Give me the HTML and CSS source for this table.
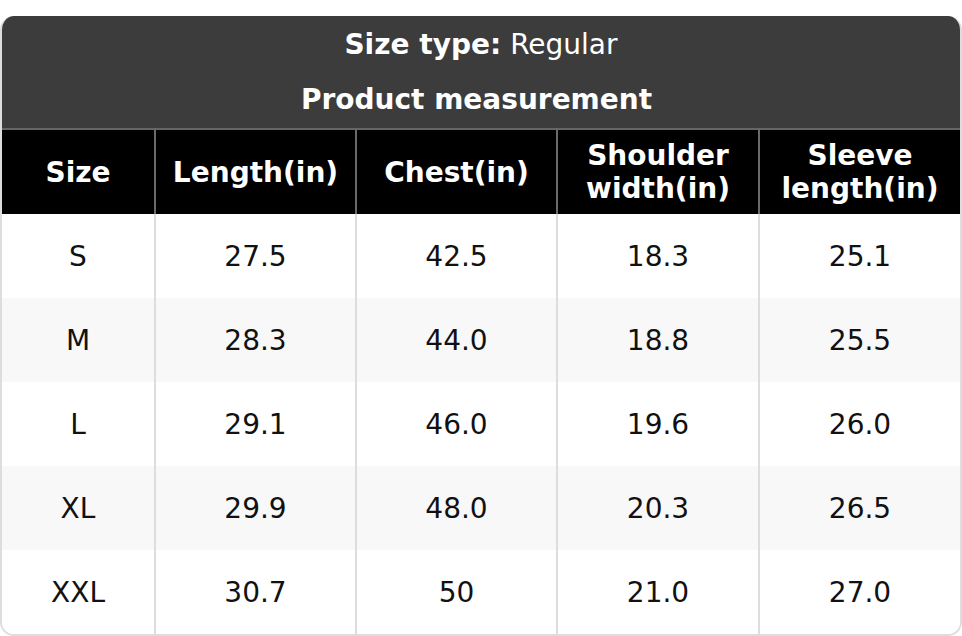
FILE: index.html
```html
<!DOCTYPE html>
<html>
<head>
<meta charset="utf-8">
<link rel="stylesheet" href="styles.css">
</head>
<body>
<div class="card">
  <div class="title">
    <div class="title-line"><b>Size type:</b> Regular</div>
    <div class="title-line second"><b>Product measurement</b></div>
  </div>
  <div class="grid">
    <div class="th">Size</div>
    <div class="th">Length(in)</div>
    <div class="th">Chest(in)</div>
    <div class="th">Shoulder<br>width(in)</div>
    <div class="th">Sleeve<br>length(in)</div>

    <div class="td">S</div><div class="td">27.5</div><div class="td">42.5</div><div class="td">18.3</div><div class="td">25.1</div>
    <div class="td alt">M</div><div class="td alt">28.3</div><div class="td alt">44.0</div><div class="td alt">18.8</div><div class="td alt">25.5</div>
    <div class="td">L</div><div class="td">29.1</div><div class="td">46.0</div><div class="td">19.6</div><div class="td">26.0</div>
    <div class="td alt">XL</div><div class="td alt">29.9</div><div class="td alt">48.0</div><div class="td alt">20.3</div><div class="td alt">26.5</div>
    <div class="td">XXL</div><div class="td">30.7</div><div class="td">50</div><div class="td">21.0</div><div class="td">27.0</div>
  </div>
</div>
</body>
</html>
```

FILE: styles.css
```css
* { box-sizing: border-box; }
html, body { margin: 0; padding: 0; background: #fff; }
body {
  padding-top: 16px;
  font-family: "DejaVu Sans", Verdana, sans-serif;
}
.card {
  width: 962px;
  border: 2px solid #dddddd;
  border-top: 0;
  border-radius: 14px;
  overflow: hidden;
}
.title {
  background: #3c3c3c;
  color: #fff;
  height: 114px;
  border-bottom: 2px solid #666;
  margin: 0 -2px;
}
.title-line {
  height: 56px;
  display: flex;
  align-items: center;
  justify-content: center;
  font-size: 28px;
}
.title-line b { font-weight: bold; margin-right: 9px; }
.title-line.second { padding-bottom: 2px; }
.grid {
  display: grid;
  grid-template-columns: 152px 201px 201px 202px 202px;
  grid-auto-rows: 84px;
}
.th {
  background: #000;
  color: #fff;
  font-weight: bold;
  font-size: 28px;
  line-height: 33px;
  display: flex;
  align-items: center;
  justify-content: center;
  text-align: center;
  border-left: 2px solid #6a6a6a;
}
.td {
  font-size: 28px;
  color: #111;
  display: flex;
  align-items: center;
  justify-content: center;
  border-left: 2px solid #dddddd;
  background: #fff;
}
.td.alt { background: #f8f8f8; }
.grid > div:nth-child(5n+1) { border-left: 0; }
```
